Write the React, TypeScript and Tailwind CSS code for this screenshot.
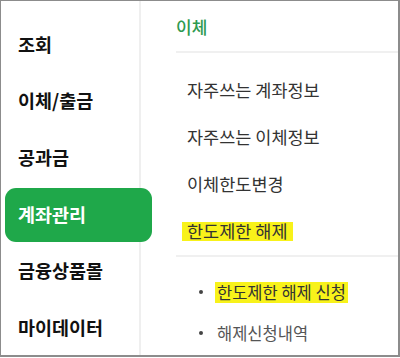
import React from "react";

const leftItems = ["조회", "이체/출금", "공과금", "계좌관리", "금융상품몰", "마이데이터"];

export default function App() {
  return (
    <div
      className="w-[400px] h-[358px] bg-white overflow-hidden"
      style={{ fontFamily: '"Noto Sans CJK KR", "Noto Sans", sans-serif' }}
    >
      <div className="w-[400px] h-[357px] border-t border-l border-b-2 border-r-2 border-[#8c8c8c] flex">
        {/* left sidebar */}
        <div className="w-[138px] shrink-0 flex flex-col pt-[16.5px] gap-[2.5px] relative">
          {leftItems.map((t) => {
            const active = t === "계좌관리";
            return (
              <div
                key={t}
                className={
                  active
                    ? "h-[55px] ml-[4px] w-[147px] relative z-10 rounded-[11px] bg-[#1fa84a] text-white flex items-center pl-[13px] text-[18.5px] font-semibold"
                    : "h-[55px] flex items-center pl-[17px] text-[18.5px] font-semibold text-[#111]"
                }
              >
                {t}
              </div>
            );
          })}
        </div>
        {/* divider */}
        <div className="w-[2px] shrink-0 bg-[#efefef]" />
        {/* right panel */}
        <div className="flex-1 flex flex-col pl-[35px]">
          <div className="h-[50px] flex items-center text-[17px] text-[#2e9a50] font-medium pt-[1px]">
            이체
          </div>
          <div className="h-[2px] bg-[#f0f0f0]" />
          <div className="flex flex-col pt-[14px] text-[17.5px] text-[#333]">
            <div className="h-[47px] flex items-center pl-[11px]">자주쓰는 계좌정보</div>
            <div className="h-[47px] flex items-center pl-[11px]">자주쓰는 이체정보</div>
            <div className="h-[47px] flex items-center pl-[11px]">이체한도변경</div>
            <div className="h-[47px] flex items-center pl-[6px]">
              <span className="bg-[#f8f21a] px-[5px] h-[19px] flex items-center">한도제한 해제</span>
            </div>
          </div>
          <div className="h-[1.5px] bg-[#f0f0f0] mt-[0px]" />
          <div className="flex flex-col pt-[15px] text-[16.5px] text-[#555]">
            <div className="h-[41px] flex items-center pl-[23px]">
              <span className="w-[4px] h-[4px] rounded-full bg-[#444] mr-[12px]" />
              <span className="bg-[#f8f21a] text-[#333] px-[2px] h-[21px] flex items-center">한도제한 해제 신청</span>
            </div>
            <div className="h-[41px] flex items-center pl-[23px]">
              <span className="w-[4px] h-[4px] rounded-full bg-[#444] mr-[14px]" />
              <span>해제신청내역</span>
            </div>
          </div>
        </div>
      </div>
    </div>
  );
}
